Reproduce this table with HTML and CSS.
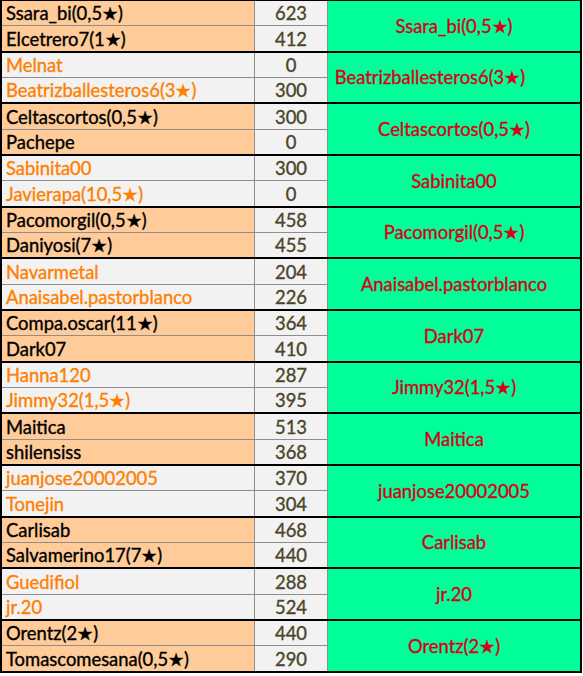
FILE: index.html
```html
<!DOCTYPE html>
<html>
<head>
<meta charset="utf-8">
<link rel="stylesheet" href="styles.css">
</head>
<body>
<div class="sheet">
  <div class="group odd">
    <div class="name r1">Ssara_bi(0,5★)</div><div class="score r1">623</div>
    <div class="win">Ssara_bi(0,5★)</div>
    <div class="name">Elcetrero7(1★)</div><div class="score">412</div>
  </div>
  <div class="group even">
    <div class="name r1">Melnat</div><div class="score r1">0</div>
    <div class="win shifted">Beatrizballesteros6(3★)</div>
    <div class="name">Beatrizballesteros6(3★)</div><div class="score">300</div>
  </div>
  <div class="group odd">
    <div class="name r1">Celtascortos(0,5★)</div><div class="score r1">300</div>
    <div class="win">Celtascortos(0,5★)</div>
    <div class="name">Pachepe</div><div class="score">0</div>
  </div>
  <div class="group even">
    <div class="name r1">Sabinita00</div><div class="score r1">300</div>
    <div class="win">Sabinita00</div>
    <div class="name">Javierapa(10,5★)</div><div class="score">0</div>
  </div>
  <div class="group odd">
    <div class="name r1">Pacomorgil(0,5★)</div><div class="score r1">458</div>
    <div class="win">Pacomorgil(0,5★)</div>
    <div class="name">Daniyosi(7★)</div><div class="score">455</div>
  </div>
  <div class="group even">
    <div class="name r1">Navarmetal</div><div class="score r1">204</div>
    <div class="win">Anaisabel.pastorblanco</div>
    <div class="name">Anaisabel.pastorblanco</div><div class="score">226</div>
  </div>
  <div class="group odd">
    <div class="name r1">Compa.oscar(11★)</div><div class="score r1">364</div>
    <div class="win">Dark07</div>
    <div class="name">Dark07</div><div class="score">410</div>
  </div>
  <div class="group even">
    <div class="name r1">Hanna120</div><div class="score r1">287</div>
    <div class="win">Jimmy32(1,5★)</div>
    <div class="name">Jimmy32(1,5★)</div><div class="score">395</div>
  </div>
  <div class="group odd">
    <div class="name r1">Maitica</div><div class="score r1">513</div>
    <div class="win">Maitica</div>
    <div class="name">shilensiss</div><div class="score">368</div>
  </div>
  <div class="group even">
    <div class="name r1">juanjose20002005</div><div class="score r1">370</div>
    <div class="win">juanjose20002005</div>
    <div class="name">Tonejin</div><div class="score">304</div>
  </div>
  <div class="group odd">
    <div class="name r1">Carlisab</div><div class="score r1">468</div>
    <div class="win">Carlisab</div>
    <div class="name">Salvamerino17(7★)</div><div class="score">440</div>
  </div>
  <div class="group even">
    <div class="name r1">Guedifiol</div><div class="score r1">288</div>
    <div class="win">jr.20</div>
    <div class="name">jr.20</div><div class="score">524</div>
  </div>
  <div class="group odd">
    <div class="name r1">Orentz(2★)</div><div class="score r1">440</div>
    <div class="win">Orentz(2★)</div>
    <div class="name">Tomascomesana(0,5★)</div><div class="score">290</div>
  </div>
</div>
</body>
</html>
```
FILE: styles.css
```css
html, body {
  margin: 0;
  padding: 0;
  background: #ffffff;
}
body {
  font-family: Lato, "Liberation Sans", sans-serif;
  font-size: 18.4px;
  -webkit-text-stroke: 0.35px currentColor;
}
.sheet {
  width: 582px;
  box-sizing: border-box;
  border-top: 1px solid #000;
  border-left: 2px solid #000;
  border-right: 2px solid #000;
}
.group {
  display: grid;
  grid-template-columns: 253px 73px 1fr;
  grid-template-rows: 25.33px 24.33px;
  border-bottom: 2px solid #000;
}
.name, .score {
  box-sizing: border-box;
  border-right: 1px solid #8e8e8e;
  display: flex;
  align-items: flex-end;
  padding-bottom: 1px;
  line-height: 22px;
  white-space: nowrap;
}
.r1 {
  border-bottom: 1px solid #8e8e8e;
}
.name {
  padding-left: 4px;
}
.score {
  background: #f2f2f2;
  color: #4a452a;
  justify-content: center;
}
.odd .name {
  background: #ffcc99;
  color: #000;
}
.even .name {
  background: #f2f2f2;
  color: #ff8000;
}
.win {
  grid-column: 3;
  grid-row: 1 / span 2;
  background: #00ff99;
  color: #d9001a;
  display: flex;
  align-items: center;
  justify-content: center;
  white-space: nowrap;
}
.shifted {
  padding-right: 48px;
}
```
